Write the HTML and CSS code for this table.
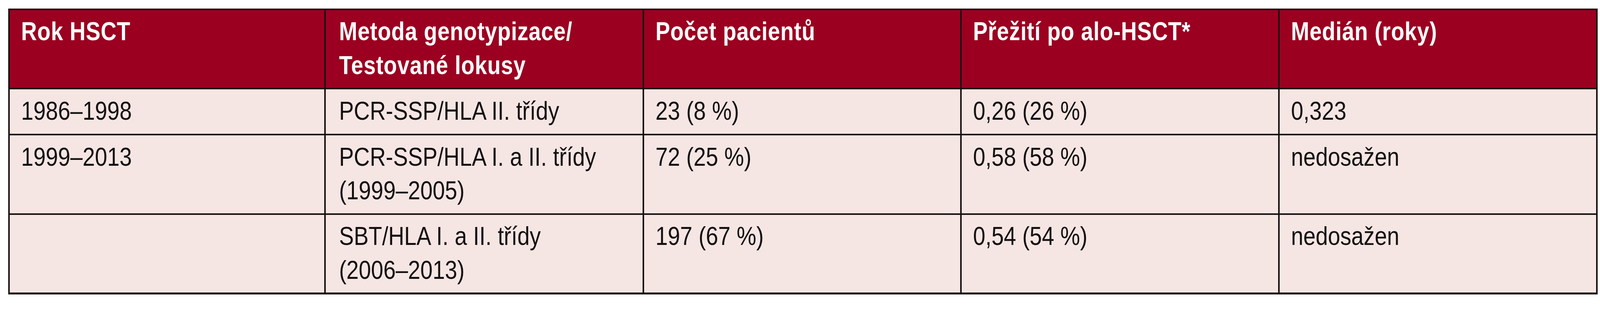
FILE: index.html
```html
<!DOCTYPE html>
<html lang="cs">
<head>
<meta charset="utf-8">
<title>Přežití po alo-HSCT</title>
<link rel="stylesheet" href="styles.css">
</head>
<body>
<div class="wrap">
<table class="data">
  <thead>
    <tr>
      <th class="w1"><div class="t">Rok HSCT</div></th>
      <th class="w2 m"><div class="t">Metoda genotypizace/<br>Testované lokusy</div></th>
      <th class="w3"><div class="t">Počet pacientů</div></th>
      <th class="w4"><div class="t">Přežití po alo-HSCT*</div></th>
      <th class="w5"><div class="t">Medián (roky)</div></th>
    </tr>
  </thead>
  <tbody>
    <tr class="short">
      <td><div class="t">1986–1998</div></td>
      <td class="m"><div class="t">PCR-SSP/HLA II. třídy</div></td>
      <td><div class="t">23 (8 %)</div></td>
      <td><div class="t">0,26 (26 %)</div></td>
      <td><div class="t">0,323</div></td>
    </tr>
    <tr>
      <td><div class="t">1999–2013</div></td>
      <td class="m"><div class="t">PCR-SSP/HLA I. a II. třídy<br>(1999–2005)</div></td>
      <td><div class="t">72 (25 %)</div></td>
      <td><div class="t">0,58 (58 %)</div></td>
      <td><div class="t">nedosažen</div></td>
    </tr>
    <tr class="last">
      <td></td>
      <td class="m"><div class="t">SBT/HLA I. a II. třídy<br>(2006–2013)</div></td>
      <td><div class="t">197 (67 %)</div></td>
      <td><div class="t">0,54 (54 %)</div></td>
      <td><div class="t">nedosažen</div></td>
    </tr>
  </tbody>
</table>
</div>
</body>
</html>
```
FILE: styles.css
```css
/* one design unit = 1/4312 of the page width */
:root {
  --u: calc(100vw / 4312);
}

html, body {
  margin: 0;
  padding: 0;
  background: #ffffff;
  overflow: hidden;
}

.wrap {
  padding: calc(23 * var(--u)) 0 0 calc(22 * var(--u));
}

.data {
  table-layout: fixed;
  width: calc(4284 * var(--u));
  border-collapse: separate;
  border-spacing: 0;
  border-top: calc(5 * var(--u)) solid #1e0404;
  border-left: calc(5 * var(--u)) solid #1a1212;
  font-family: "Liberation Sans", Arial, sans-serif;
  font-size: calc(71 * var(--u));
  line-height: calc(91 * var(--u));
  color: #141010;
}

.data th,
.data td {
  text-align: left;
  vertical-align: top;
  padding: calc(12 * var(--u)) calc(10 * var(--u)) calc(16 * var(--u)) calc(31 * var(--u));
  border-right: calc(5 * var(--u)) solid #1a1212;
  border-bottom: calc(5 * var(--u)) solid #1a1212;
  white-space: nowrap;
  overflow: hidden;
}

/* content widths: cell outer = width + padding + border */
.data .w1 { width: calc(806 * var(--u)); }
.data .w2 { width: calc(807 * var(--u)); }
.data .w3 { width: calc(810 * var(--u)); }
.data .w4 { width: calc(811 * var(--u)); }
.data .w5 { width: calc(811 * var(--u)); }

.data th {
  background: #9b0020;
  color: #ffffff;
  font-weight: bold;
}

.data td {
  background: #f5e6e4;
  font-weight: normal;
}

.t {
  display: block;
  transform: scaleX(0.84);
  transform-origin: 0 0;
}

.data th .t {
  transform: scaleX(0.83);
  letter-spacing: calc(1 * var(--u));
}

.data .m {
  padding-left: calc(35 * var(--u));
}

.data tr.short td {
  padding-bottom: calc(17 * var(--u));
}

.data tr.last td {
  border-bottom-width: calc(6 * var(--u));
}
```
